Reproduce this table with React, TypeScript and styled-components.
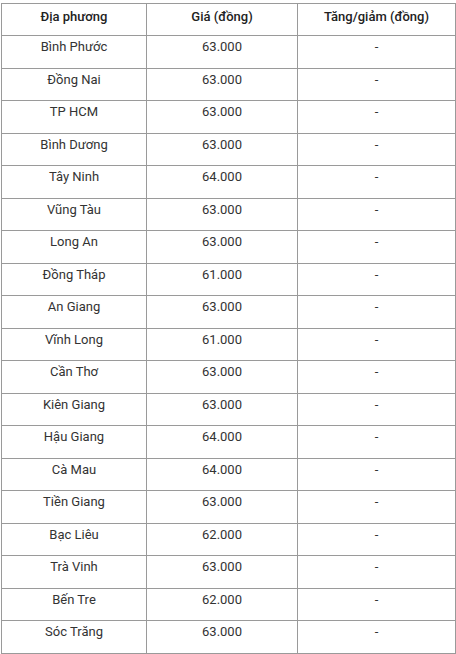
import React from "react";
import styled, {createGlobalStyle} from "styled-components";

const rows: [string, string, string][] = [
  ["Bình Phước", "63.000", "-"],
  ["Đồng Nai", "63.000", "-"],
  ["TP HCM", "63.000", "-"],
  ["Bình Dương", "63.000", "-"],
  ["Tây Ninh", "64.000", "-"],
  ["Vũng Tàu", "63.000", "-"],
  ["Long An", "63.000", "-"],
  ["Đồng Tháp", "61.000", "-"],
  ["An Giang", "63.000", "-"],
  ["Vĩnh Long", "61.000", "-"],
  ["Cần Thơ", "63.000", "-"],
  ["Kiên Giang", "63.000", "-"],
  ["Hậu Giang", "64.000", "-"],
  ["Cà Mau", "64.000", "-"],
  ["Tiền Giang", "63.000", "-"],
  ["Bạc Liêu", "62.000", "-"],
  ["Trà Vinh", "63.000", "-"],
  ["Bến Tre", "62.000", "-"],
  ["Sóc Trăng", "63.000", "-"],
];

const App = () => {
  return (
    <Wrapper>
      <GlobalStyle />
      <Table>
        <colgroup>
          <col style={{width: 145}} />
          <col style={{width: 151}} />
          <col style={{width: 158}} />
        </colgroup>
        <thead>
          <tr>
            <HeadCell>Địa phương</HeadCell>
            <HeadCell>Giá (đồng)</HeadCell>
            <HeadCell>Tăng/giảm (đồng)</HeadCell>
          </tr>
        </thead>
        <tbody>
          {rows.map((row) => (
            <tr key={row[0]}>
              {row.map((cell, i) => (
                <Cell key={i}>{cell}</Cell>
              ))}
            </tr>
          ))}
        </tbody>
      </Table>
    </Wrapper>
  );
};

const GlobalStyle = createGlobalStyle`
  body {
    margin: 0;
    background: #ffffff;
    font-family: Roboto, "Noto Sans", sans-serif;
    color: #222222;
  }
`;

const Wrapper = styled.div`
  padding: 3px 0 0 1px;
`;

const Table = styled.table`
  width: 455px;
  border-collapse: collapse;
  table-layout: fixed;
  border: 1px solid #9a9a9a;
`;

const HeadCell = styled.th`
  height: 32px;
  padding: 5px 4px 0;
  box-sizing: border-box;
  vertical-align: top;
  border: 1px solid #9a9a9a;
  font-size: 13px;
  font-weight: 500;
  line-height: 16px;
  text-align: center;
  color: #222222;
`;

const Cell = styled.td`
  height: 32.5px;
  padding: 3px 4px 0;
  box-sizing: border-box;
  vertical-align: top;
  border: 1px solid #9a9a9a;
  font-size: 13px;
  line-height: 16px;
  text-align: center;
  color: #333333;
`;

export default App;
